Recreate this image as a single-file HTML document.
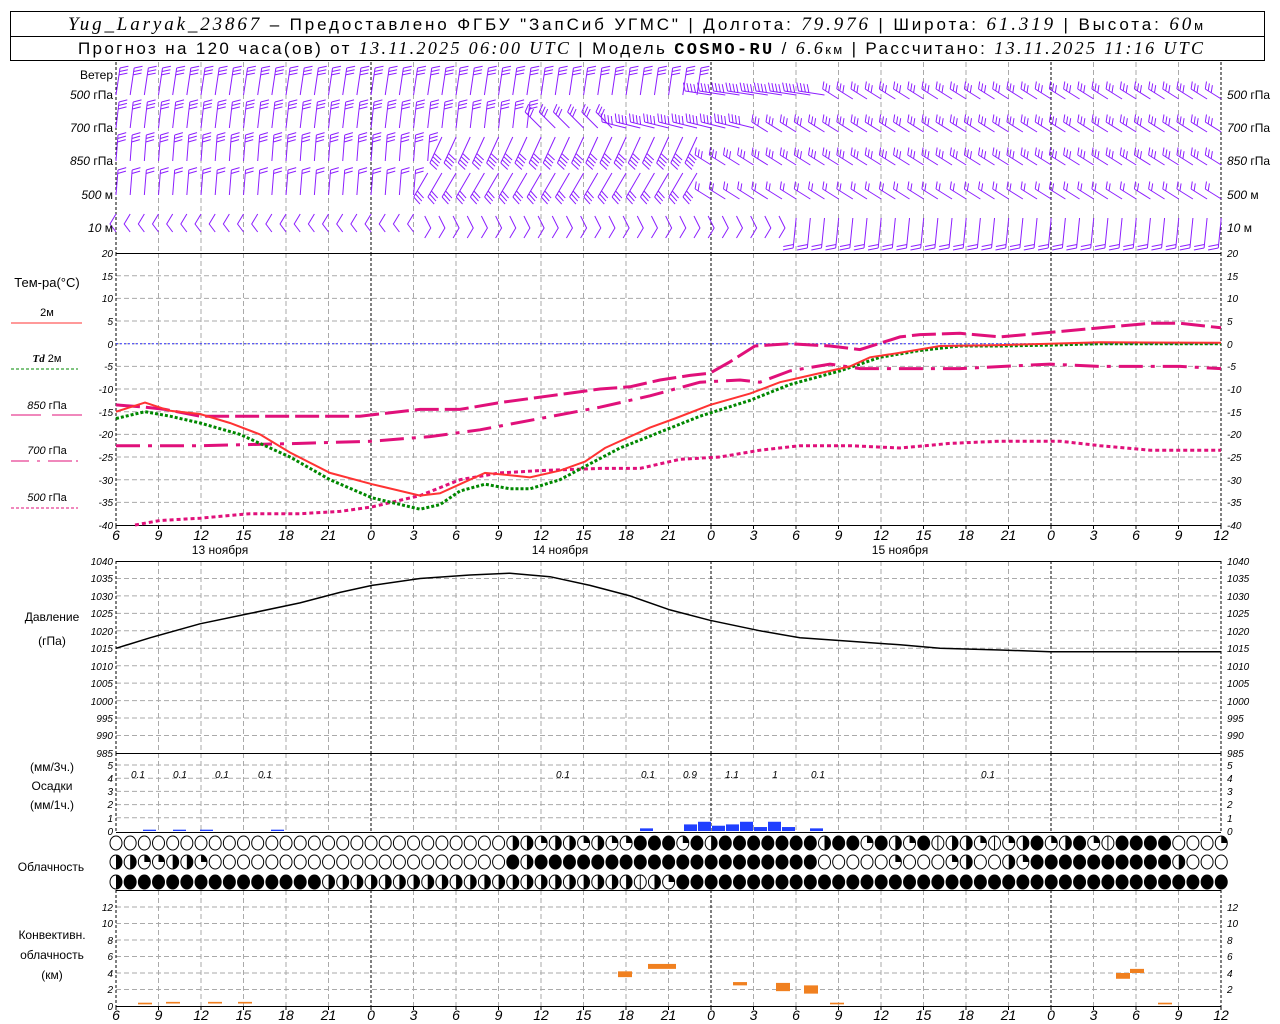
<!DOCTYPE html>
<html><head><meta charset="utf-8">
<style>
html,body{margin:0;padding:0;background:#fff;}
svg{display:block;font-family:"Liberation Sans",sans-serif;}
.hd{font-size:17px;fill:#000;}
.it{font-family:"Liberation Serif",serif;font-style:italic;}
.ax{font-size:10px;font-style:italic;fill:#000;}
.tl{font-size:14px;font-style:italic;fill:#000;}
.lb{font-size:12px;fill:#000;}
</style></head><body>
<svg id="s" width="1280" height="1024" viewBox="0 0 1280 1024" xmlns="http://www.w3.org/2000/svg">
<rect x="0" y="0" width="1280" height="1024" fill="#fff"/>
<g id="grid"></g>
<g id="draw"></g>
<!-- header -->
<rect x="10.5" y="11.5" width="1254" height="49" fill="none" stroke="#000"/>
<line x1="10" y1="36.5" x2="1265" y2="36.5" stroke="#000"/>
<text x="68" y="30" class="hd" textLength="1135" lengthAdjust="spacing"><tspan class="it" font-size="19">Yug_Laryak_23867</tspan> – Предоставлено ФГБУ "ЗапСиб УГМС" | Долгота: <tspan class="it" font-size="19">79.976</tspan> | Широта: <tspan class="it" font-size="19">61.319</tspan> | Высота: <tspan class="it" font-size="19">60</tspan><tspan font-size="13">м</tspan></text>
<text x="78" y="54" class="hd" font-size="16" textLength="1125" lengthAdjust="spacing">Прогноз на 120 часа(ов) от <tspan class="it" font-size="18">13.11.2025 06:00 UTC</tspan>  | Модель <tspan font-family="Liberation Mono" font-weight="bold" font-size="17">COSMO-RU</tspan> / <tspan class="it" font-size="18">6.6</tspan><tspan font-size="13">км</tspan> | Рассчитано: <tspan class="it" font-size="18">13.11.2025 11:16 UTC</tspan></text>

<!-- wind labels -->
<g class="lb" font-size="11">
<text x="113" y="79" text-anchor="end" font-size="12">Ветер</text>
<text x="113" y="99" text-anchor="end"><tspan font-style="italic">500</tspan> гПа</text>
<text x="113" y="132" text-anchor="end"><tspan font-style="italic">700</tspan> гПа</text>
<text x="113" y="165" text-anchor="end"><tspan font-style="italic">850</tspan> гПа</text>
<text x="113" y="199" text-anchor="end"><tspan font-style="italic">500</tspan> м</text>
<text x="113" y="232" text-anchor="end"><tspan font-style="italic">10</tspan>   м</text>
<text x="1227" y="99"><tspan font-style="italic">500</tspan> гПа</text>
<text x="1227" y="132"><tspan font-style="italic">700</tspan> гПа</text>
<text x="1227" y="165"><tspan font-style="italic">850</tspan> гПа</text>
<text x="1227" y="199"><tspan font-style="italic">500</tspan> м</text>
<text x="1227" y="232"><tspan font-style="italic">10</tspan>   м</text>
</g>

<!-- temp legend -->
<g class="lb">
<text x="47" y="287" text-anchor="middle" font-size="13">Тем-ра(°С)</text>
<text x="47" y="316" text-anchor="middle" font-size="11">2м</text>
<line x1="11" y1="323" x2="82" y2="323" stroke="#f33" stroke-width="1"/>
<text x="47" y="362" text-anchor="middle" font-size="11"><tspan class="it" font-weight="bold">Td</tspan>  2м</text>
<line x1="11" y1="369" x2="78" y2="369" stroke="#080" stroke-dasharray="3,2"/>
<text x="47" y="409" text-anchor="middle" font-size="11"><tspan font-style="italic">850</tspan> гПа</text>
<line x1="11" y1="415" x2="41" y2="415" stroke="#e0107a"/><line x1="52" y1="415" x2="82" y2="415" stroke="#e0107a"/>
<text x="47" y="454" text-anchor="middle" font-size="11"><tspan font-style="italic">700</tspan> гПа</text>
<path d="M11 461h18M37 461h3M48 461h24M76 461h2" stroke="#e0107a"/>
<text x="47" y="501" text-anchor="middle" font-size="11"><tspan font-style="italic">500</tspan> гПа</text>
<line x1="11" y1="508" x2="78" y2="508" stroke="#e0107a" stroke-dasharray="3,2"/>
<text x="52" y="621" text-anchor="middle" font-size="12">Давление</text>
<text x="52" y="645" text-anchor="middle" font-size="12">(гПа)</text>
<text x="52" y="771" text-anchor="middle" font-size="12">(мм/3ч.)</text>
<text x="52" y="790" text-anchor="middle" font-size="12">Осадки</text>
<text x="52" y="809" text-anchor="middle" font-size="12">(мм/1ч.)</text>
<text x="51" y="871" text-anchor="middle" font-size="12">Облачность</text>
<text x="52" y="939" text-anchor="middle" font-size="12">Конвективн.</text>
<text x="52" y="959" text-anchor="middle" font-size="12">облачность</text>
<text x="52" y="979" text-anchor="middle" font-size="12">(км)</text>
</g>

<!-- temp axis labels -->
<g class="ax">
<g text-anchor="end">
<text x="113" y="257">20</text><text x="113" y="280">15</text><text x="113" y="302">10</text><text x="113" y="325">5</text><text x="113" y="348">0</text><text x="113" y="370">-5</text><text x="113" y="393">-10</text><text x="113" y="416">-15</text><text x="113" y="438">-20</text><text x="113" y="461">-25</text><text x="113" y="484">-30</text><text x="113" y="506">-35</text><text x="113" y="529">-40</text>
<text x="113" y="565">1040</text><text x="113" y="582">1035</text><text x="113" y="600">1030</text><text x="113" y="617">1025</text><text x="113" y="635">1020</text><text x="113" y="652">1015</text><text x="113" y="670">1010</text><text x="113" y="687">1005</text><text x="113" y="705">1000</text><text x="113" y="722">995</text><text x="113" y="739">990</text><text x="113" y="757">985</text>
<text x="113" y="769">5</text><text x="113" y="782">4</text><text x="113" y="795">3</text><text x="113" y="808">2</text><text x="113" y="822">1</text><text x="113" y="835">0</text>
<text x="113" y="911">12</text><text x="113" y="927">10</text><text x="113" y="944">8</text><text x="113" y="960">6</text><text x="113" y="977">4</text><text x="113" y="993">2</text><text x="113" y="1010">0</text>
</g>
<g>
<text x="1227" y="257">20</text><text x="1227" y="280">15</text><text x="1227" y="302">10</text><text x="1227" y="325">5</text><text x="1227" y="348">0</text><text x="1227" y="370">-5</text><text x="1227" y="393">-10</text><text x="1227" y="416">-15</text><text x="1227" y="438">-20</text><text x="1227" y="461">-25</text><text x="1227" y="484">-30</text><text x="1227" y="506">-35</text><text x="1227" y="529">-40</text>
<text x="1227" y="565">1040</text><text x="1227" y="582">1035</text><text x="1227" y="600">1030</text><text x="1227" y="617">1025</text><text x="1227" y="635">1020</text><text x="1227" y="652">1015</text><text x="1227" y="670">1010</text><text x="1227" y="687">1005</text><text x="1227" y="705">1000</text><text x="1227" y="722">995</text><text x="1227" y="739">990</text><text x="1227" y="757">985</text>
<text x="1227" y="769">5</text><text x="1227" y="782">4</text><text x="1227" y="795">3</text><text x="1227" y="808">2</text><text x="1227" y="822">1</text><text x="1227" y="835">0</text>
<text x="1227" y="911">12</text><text x="1227" y="927">10</text><text x="1227" y="944">8</text><text x="1227" y="960">6</text><text x="1227" y="977">4</text><text x="1227" y="993">2</text>
</g>
</g>

<!-- hour labels -->
<g class="tl" text-anchor="middle">
<text x="116" y="540">6</text><text x="158.5" y="540">9</text><text x="201" y="540">12</text><text x="243.5" y="540">15</text><text x="286" y="540">18</text><text x="328.5" y="540">21</text><text x="371" y="540">0</text><text x="413.5" y="540">3</text><text x="456" y="540">6</text><text x="498.5" y="540">9</text><text x="541" y="540">12</text><text x="583.5" y="540">15</text><text x="626" y="540">18</text><text x="668.5" y="540">21</text><text x="711" y="540">0</text><text x="753.5" y="540">3</text><text x="796" y="540">6</text><text x="838.5" y="540">9</text><text x="881" y="540">12</text><text x="923.5" y="540">15</text><text x="966" y="540">18</text><text x="1008.5" y="540">21</text><text x="1051" y="540">0</text><text x="1093.5" y="540">3</text><text x="1136" y="540">6</text><text x="1178.5" y="540">9</text><text x="1221" y="540">12</text>
<text x="116" y="1020">6</text><text x="158.5" y="1020">9</text><text x="201" y="1020">12</text><text x="243.5" y="1020">15</text><text x="286" y="1020">18</text><text x="328.5" y="1020">21</text><text x="371" y="1020">0</text><text x="413.5" y="1020">3</text><text x="456" y="1020">6</text><text x="498.5" y="1020">9</text><text x="541" y="1020">12</text><text x="583.5" y="1020">15</text><text x="626" y="1020">18</text><text x="668.5" y="1020">21</text><text x="711" y="1020">0</text><text x="753.5" y="1020">3</text><text x="796" y="1020">6</text><text x="838.5" y="1020">9</text><text x="881" y="1020">12</text><text x="923.5" y="1020">15</text><text x="966" y="1020">18</text><text x="1008.5" y="1020">21</text><text x="1051" y="1020">0</text><text x="1093.5" y="1020">3</text><text x="1136" y="1020">6</text><text x="1178.5" y="1020">9</text><text x="1221" y="1020">12</text>
</g>
<g class="lb" font-size="13" text-anchor="middle">
<text x="220" y="554">13 ноября</text><text x="560" y="554">14 ноября</text><text x="900" y="554">15 ноября</text>
</g>
<g class="ax" font-size="12" text-anchor="middle">
<text x="138" y="778">0.1</text><text x="180" y="778">0.1</text><text x="222" y="778">0.1</text><text x="265" y="778">0.1</text><text x="563" y="778">0.1</text><text x="648" y="778">0.1</text><text x="690" y="778">0.9</text><text x="732" y="778">1.1</text><text x="775" y="778">1</text><text x="818" y="778">0.1</text><text x="988" y="778">0.1</text>
</g>
</svg>
<script>
(function(){
var NS="http://www.w3.org/2000/svg";
var G=document.getElementById("grid"),D=document.getElementById("draw");
function el(p,t,a){var e=document.createElementNS(NS,t);for(var k in a)e.setAttribute(k,a[k]);p.appendChild(e);return e;}
var X0=116,X1=1221,DX=42.5;
function hl(y,x0,x1){el(G,"line",{x1:x0||116,x2:x1||1221,y1:y,y2:y,stroke:"#aaa","stroke-dasharray":"5,3"});}
for(var T=15;T>=-35;T-=5){hl(343.7-T*4.533);}
for(var p=1035;p>=990;p-=5){hl(561+(1040-p)*3.49);}
for(var m=1;m<=5;m++)hl(831-m*13.2);
for(var c=2;c<=12;c+=2)hl(1006-c*8.25);
for(var k=0;k<=26;k++){var x=X0+k*DX;var blk=(k%8==6)||k==0||k==26;
 var segs=[[62,253],[253,525],[561,753],[753,832],[890,1006]];
 segs.forEach(function(s){el(G,"line",{x1:x,x2:x,y1:s[0],y2:s[1],stroke:blk?"#000":"#aaa","stroke-dasharray":blk?"3,2":"5,3"});});
 el(G,"line",{x1:x,x2:x,y1:525,y2:529,stroke:"#000"});el(G,"line",{x1:x,x2:x,y1:1006,y2:1010,stroke:"#000"});
}
el(G,"line",{x1:116,x2:1221,y1:343.7,y2:343.7,stroke:"#33f","stroke-dasharray":"2,2"});
[253,525,561,753,832,890,1006].forEach(function(y){el(G,"line",{x1:116,x2:1221,y1:y+0.5,y2:y+0.5,stroke:"#000"});});
function yT(t){return 343.7-t*4.533;}
function curve(pts,fy,attr){var d="M";pts.forEach(function(p,i){d+=(i?" L":"")+p[0]+" "+fy(p[1]).toFixed(1);});attr.d=d;attr.fill="none";el(D,"path",attr);}
curve([[135,-40],[160,-39],[200,-38.5],[250,-37.5],[300,-37.5],[340,-37],[372,-36],[420,-33.5],[460,-30],[500,-28.5],[540,-28],[600,-27.5],[640,-27.5],[680,-25.5],[720,-25],[760,-23.5],[800,-22.5],[850,-22.5],[900,-23],[950,-22],[1000,-21.5],[1060,-21.5],[1100,-22.5],[1150,-23.5],[1221,-23.5]],yT,{stroke:"#e0107a","stroke-width":3,"stroke-dasharray":"4,3"});
curve([[116,-22.5],[200,-22.5],[300,-22],[372,-21.5],[430,-20.5],[480,-19],[540,-16.5],[600,-14],[650,-11.5],[700,-8.5],[740,-8],[760,-8.5],[790,-6],[830,-4.5],[860,-5.5],[900,-5.5],[960,-5.5],[1050,-4.5],[1100,-5],[1180,-5],[1221,-5.5]],yT,{stroke:"#e0107a","stroke-width":3,"stroke-dasharray":"24,8,4,8"});
curve([[116,-13.5],[145,-14],[165,-14.5],[200,-16],[250,-16],[300,-16],[360,-16],[420,-14.5],[460,-14.5],[500,-13],[550,-11.5],[600,-10],[630,-9.5],[660,-8],[690,-7],[710,-6.5],[730,-4],[755,-0.5],[790,0],[830,-0.5],[860,-1.3],[900,1.5],[920,2],[960,2.3],[1000,1.5],[1050,2.5],[1090,3.3],[1150,4.5],[1180,4.5],[1221,3.5]],yT,{stroke:"#e0107a","stroke-width":3,"stroke-dasharray":"24,6"});
curve([[116,-16.5],[145,-15],[170,-16],[200,-17.5],[240,-20],[290,-25],[330,-30],[372,-34],[420,-36.5],[440,-35.5],[460,-32.5],[485,-31],[510,-32],[530,-32],[560,-30],[590,-26.5],[620,-23],[660,-19.5],[700,-16],[750,-12.5],[790,-9],[840,-6],[880,-3],[920,-1.5],[960,-0.5],[1000,-0.5],[1050,-0.3],[1100,0],[1221,0]],yT,{stroke:"#080","stroke-width":3,"stroke-dasharray":"3,2"});
curve([[116,-15],[145,-13],[170,-14.8],[200,-15.5],[230,-17.5],[260,-20],[290,-24],[330,-28.5],[372,-31],[420,-33.5],[440,-33],[460,-31],[485,-28.5],[510,-29],[530,-29.5],[560,-28],[585,-26],[605,-23],[630,-20.5],[650,-18.5],[675,-16.5],[710,-13.5],[750,-11],[780,-8.5],[810,-7],[850,-5],[870,-3],[900,-2],[940,-0.5],[1000,-0.3],[1050,0],[1100,0.3],[1221,0.2]],yT,{stroke:"#f33","stroke-width":2});
curve([[116,1015],[150,1018],[200,1022],[250,1025],[300,1028],[340,1031],[372,1033],[420,1035],[470,1036],[510,1036.5],[550,1035.5],[590,1033],[630,1030],[670,1026],[710,1023],[760,1020],[800,1018],[850,1017],[900,1016],[940,1015],[1000,1014.5],[1050,1014],[1150,1014],[1221,1014]],function(p){return 561+(1040-p)*3.49;},{stroke:"#000","stroke-width":1.5});
var H=14.17;
[[640,0.2],[684,0.5],[698,0.7],[712,0.4],[726,0.5],[740,0.7],[754,0.3],[768,0.7],[782,0.3],[810,0.2],[143,0.1],[173,0.1],[200,0.1],[271,0.1]].forEach(function(b){el(D,"rect",{x:b[0],y:831-b[1]*13.2,width:13,height:b[1]*13.2,fill:"#2040ff"});});
[[618,3.5,4.2],[648,4.5,5.1],[733,2.5,2.9],[776,1.8,2.8],[804,1.5,2.5],[1116,3.3,4.0],[1130,4,4.5],[138,0.2,0.4],[166,0.3,0.5],[208,0.3,0.5],[238,0.3,0.5],[1158,0.2,0.4],[830,0.2,0.4]].forEach(function(b){el(D,"rect",{x:b[0],y:1006-b[2]*8.25,width:(b[0]==648?28:14),height:(b[2]-b[1])*8.25,fill:"#f08020"});});
var rows=[
"oooooooooooooooooooooooooooohhqhhqhqqfffqfhfffffffhffqfhqfvhhqvqhfqhfqvffffoo q",
"hhqqhhqooooooooooooooooooooofhffffffffffffffffffffoooooqoooqhoohqffffffffffhooo",
"hffffffffffffffhhhhhhhhhhhhhhhhhhhhhhvhqffffffffffffffffffffffffffffffffffffff"];
var ry=[843,862,882];
rows.forEach(function(r,ri){for(var i=0;i<79;i++){var ch=r.charAt(i)||"f";if(ch==" ")ch="o";var cx=116+i*H,cy=ry[ri];
 el(D,"ellipse",{cx:cx,cy:cy,rx:6,ry:7,fill:ch=="f"?"#000":"#fff",stroke:"#000"});
 if(ch=="h"){el(D,"path",{d:"M"+cx+" "+(cy-7)+"A6 7 0 0 1 "+cx+" "+(cy+7)+"Z",fill:"#000"});}
 if(ch=="q"){el(D,"path",{d:"M"+cx+" "+cy+"L"+cx+" "+(cy-7)+"A6 7 0 0 1 "+(cx+6)+" "+cy+"Z",fill:"#000"});}
 if(ch=="v"){el(D,"line",{x1:cx,x2:cx,y1:cy-7,y2:cy+7,stroke:"#000"});}
}});
var PC="#8c1eff";var WG=el(D,"g",{stroke:PC,"stroke-width":1,fill:"none"});
function barb(bx,by,dx,dy,n,bl,side){var L=Math.sqrt(dx*dx+dy*dy),ux=dx/L,uy=dy/L,px=-uy*side,py=ux*side;var d="M"+bx+" "+by+"l"+dx+" "+dy;
 for(var k=0;k<n;k++){var sx=bx+dx-ux*k*3.5,sy=by+dy-uy*k*3.5;d+="M"+sx.toFixed(1)+" "+sy.toFixed(1)+"l"+((px*bl+ux*3)).toFixed(1)+" "+((py*bl+uy*3)).toFixed(1);}
 el(WG,"path",{d:d});}
var lv=[95,128,161,195,228];
for(var i=0;i<79;i++){var x=116+i*H;
 var y=lv[0];
 if(i<42)barb(x,y,4,-27,3,8,1);else if(i<51)barb(x,y,-26,-4,4,8,1);else barb(x,y+4,-16,-10,3,7,1);
 y=lv[1];
 if(i<30)barb(x,y,3,-26,3,8,1);else if(i<36)barb(x,y,-16,-16,3,8,1);else if(i<46)barb(x,y,-24,-6,4,8,1);else barb(x,y+4,-16,-10,3,7,1);
 y=lv[2];
 if(i<23)barb(x,y,2,-26,3,8,1);else if(i<42)barb(x,y-24,-12,26,4,9,-1);else barb(x,y+4,-16,-10,3,7,1);
 y=lv[3];
 if(i<22)barb(x,y,2,-25,2,8,1);else if(i<42)barb(x,y-22,-14,24,3,9,-1);else barb(x,y+4,-16,-10,2,7,1);
 y=lv[4];
 if(i<22){el(WG,"path",{d:"M"+x+" "+(y-14)+"l-6 10l6 8"});}
 else if(i<48){el(WG,"path",{d:"M"+(x-3)+" "+(y-12)+"l6 12l-6 10"});}
 else {barb(x,y-10,-3,30,2,10,1);}
}
})();
</script>
</body></html>
